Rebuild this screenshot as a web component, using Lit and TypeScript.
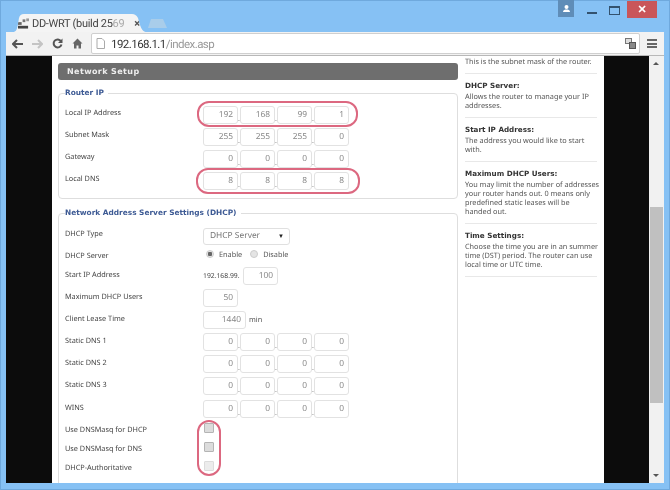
import { LitElement, html, css } from 'lit'
import { customElement } from 'lit/decorators.js'

type Row = { label: string; kind: 'ip' | 'select' | 'radio' | 'start' | 'num' | 'lease'; vals?: string[] }

const routerRows: Row[] = [
  { label: 'Local IP Address', kind: 'ip', vals: ['192', '168', '99', '1'] },
  { label: 'Subnet Mask', kind: 'ip', vals: ['255', '255', '255', '0'] },
  { label: 'Gateway', kind: 'ip', vals: ['0', '0', '0', '0'] },
  { label: 'Local DNS', kind: 'ip', vals: ['8', '8', '8', '8'] },
]

const zeros = ['0', '0', '0', '0']
const dhcpRows: Row[] = [
  { label: 'DHCP Type', kind: 'select' },
  { label: 'DHCP Server', kind: 'radio' },
  { label: 'Start IP Address', kind: 'start' },
  { label: 'Maximum DHCP Users', kind: 'num' },
  { label: 'Client Lease Time', kind: 'lease' },
  { label: 'Static DNS 1', kind: 'ip', vals: zeros },
  { label: 'Static DNS 2', kind: 'ip', vals: zeros },
  { label: 'Static DNS 3', kind: 'ip', vals: zeros },
  { label: 'WINS', kind: 'ip', vals: zeros },
]

const checks = ['Use DNSMasq for DHCP', 'Use DNSMasq for DNS', 'DHCP-Authoritative']

// line breaks as they fall in the reference
const help = [
  { title: '', text: 'This is the subnet mask of the router.' },
  { title: 'DHCP Server:', text: 'Allows the router to manage your IP\naddresses.' },
  { title: 'Start IP Address:', text: 'The address you would like to start\nwith.' },
  { title: 'Maximum DHCP Users:', text: 'You may limit the number of addresses\nyour router hands out. 0 means only\npredefined static leases will be\nhanded out.' },
  { title: 'Time Settings:', text: 'Choose the time you are in an summer\ntime (DST) period. The router can use\nlocal time or UTC time.' },
]

@customElement('app-root')
export class AppRoot extends LitElement {
  static styles = css`
    :host {
      display: block;
      width: 670px;
      height: 490px;
      overflow: hidden;
      font-family: 'Noto Sans', sans-serif;
      text-rendering: geometricPrecision;
    }
    .frame {
      position: relative;
      width: 670px;
      height: 490px;
      background: #86c1f4;
      box-shadow: inset 0 0 0 1px #6fa9dd;
      display: flex;
      flex-direction: column;
      padding: 0 6px 7px 6px;
      box-sizing: border-box;
      filter: blur(0.35px);
    }
    .titlebar {
      height: 32px;
      flex: none;
      display: flex;
      align-items: flex-end;
      justify-content: space-between;
    }
    .tabs {
      display: flex;
      align-items: flex-end;
      padding-left: 6px;
      gap: 1px;
    }
    .tab {
      width: 135px;
      height: 18px;
      background: #f4f4f4;
      clip-path: path('M0 18C5 18 5 16 7 4C8 1 9 0 12 0L120 0C123 0 124 1 126 4C129 16 131 18 135 18Z');
      display: flex;
      align-items: center;
      padding: 0 0 0 6px;
      box-sizing: border-box;
      font: 11px 'Roboto', sans-serif;
      letter-spacing: -0.3px;
      color: #444;
      white-space: nowrap;
      gap: 3px;
    }
    .tab svg {
      flex: none;
    }
    .tab .x {
      margin-left: 7px;
      font-size: 11px;
      font-weight: bold;
      color: #555;
    }
    .tab .fade {
      color: #aaa;
    }
    .newtab {
      width: 19px;
      height: 9px;
      margin-bottom: 4px;
      background: #a9cdea;
      clip-path: polygon(0 100%, 3px 0, 15px 0, 19px 100%);
    }
    .winbtns {
      display: flex;
      align-self: flex-start;
      align-items: flex-start;
      margin-right: 7px;
    }
    .user {
      width: 16px;
      height: 17px;
      background: #5f8db8;
      margin-right: 12px;
      display: flex;
      align-items: center;
      justify-content: center;
    }
    .minbtn {
      width: 12px;
      height: 17px;
      position: relative;
      margin-right: 11px;
    }
    .minbtn::after {
      content: '';
      position: absolute;
      left: 1px;
      right: 1px;
      top: 12px;
      height: 2px;
      background: #33526e;
    }
    .maxbtn {
      width: 9px;
      height: 6px;
      margin: 6px 7px 0 0;
      border: 1px solid #33526e;
      border-top-width: 2px;
    }
    .close {
      width: 30px;
      height: 17px;
      margin-top: 1px;
      background: #c9565a;
      color: #fff;
      font: bold 11px 'Liberation Sans', sans-serif;
      display: flex;
      align-items: center;
      justify-content: center;
    }
    .toolbar {
      height: 24px;
      flex: none;
      background: #f2f2f2;
      display: flex;
      align-items: center;
      border-bottom: 1px solid #b8b8b8;
      box-sizing: border-box;
      padding: 0 6px 0 6px;
    }
    .nav {
      display: flex;
      align-items: center;
      gap: 9px;
      width: 79px;
      flex: none;
    }
    .omnibox {
      flex: 1;
      height: 21px;
      background: #fff;
      border: 1px solid #cfcfcf;
      border-radius: 2px;
      box-sizing: border-box;
      display: flex;
      align-items: center;
      padding: 0 2px 0 4px;
      font: 11.5px 'Roboto', sans-serif;
      letter-spacing: -0.55px;
      color: #333;
      gap: 6px;
    }
    .omnibox .path {
      color: #999;
    }
    .omnibox .url {
      flex: 1;
    }
    .menu {
      width: 10px;
      margin-left: 7px;
      margin-right: 1px;
      flex: none;
      display: flex;
      flex-direction: column;
      gap: 1.5px;
    }
    .menu i {
      display: block;
      height: 2px;
      background: #666;
    }
    .viewport {
      flex: 1;
      min-height: 0;
      display: flex;
      background: #0c0c0c;
      overflow: hidden;
    }
    .page {
      margin-left: 46px;
      width: 552px;
      flex: none;
      background: #fff;
      display: flex;
      box-sizing: border-box;
      padding: 7px 0 0 6px;
      gap: 7px;
      overflow: hidden;
    }
    .main {
      width: 400px;
      flex: none;
    }
    .header {
      height: 17px;
      background: #6e6e6e;
      border-radius: 3px;
      color: #eee;
      font: bold 8px 'DejaVu Sans', sans-serif;
      letter-spacing: 0.4px;
      display: flex;
      align-items: center;
      padding-left: 9px;
    }
    fieldset {
      margin: 0;
      padding: 8px 0 0 6px;
      border: 1px solid #dedede;
      border-radius: 4px;
      min-width: 0;
    }
    .router {
      margin-top: 8px;
      height: 111px;
      box-sizing: border-box;
    }
    .dhcp {
      margin-top: 9px;
      height: 300px;
      padding-top: 9px;
      box-sizing: border-box;
    }
    legend {
      padding: 0 4px 0 0;
      margin-left: 0;
      font: bold 7.4px 'DejaVu Sans', sans-serif;
      color: #3d5a94;
      line-height: 10px;
    }
    .row {
      display: flex;
      height: 22.1px;
      align-items: flex-start;
      font-size: 7.3px;
      line-height: 10px;
      color: #444;
    }
    .row.select-row {
      height: 21px;
    }
    .row.radio-row {
      height: 19px;
    }
    .row.radio-row .ctrl {
      margin-top: -2px;
    }
    .row .label {
      width: 138px;
      flex: none;
      padding-top: 2px;
    }
    .dhcp .row .label {
      padding-top: 3px;
    }
    .dhcp .row.select-row .label {
      padding-top: 2px;
    }
    .ctrl {
      display: flex;
      align-items: center;
      height: 18px;
      color: #555;
    }
    .inp {
      width: 35px;
      height: 18px;
      border: 1px solid #e2e2e2;
      border-radius: 3px;
      box-sizing: border-box;
      display: flex;
      align-items: center;
      justify-content: flex-end;
      padding-right: 4px;
      color: #888;
      font-size: 8.4px;
      background: #fff;
    }
    .inp.wide {
      width: 43px;
    }
    .dot {
      width: 2px;
      align-self: flex-end;
      font-size: 7px;
      line-height: 9px;
      color: #666;
    }
    .select {
      width: 87px;
      height: 17px;
      border: 1px solid #e0e0e0;
      border-radius: 3px;
      box-sizing: border-box;
      display: flex;
      align-items: center;
      justify-content: space-between;
      padding: 0 5px 0 6px;
      font-size: 8.4px;
      color: #777;
    }
    .select b {
      font-size: 6px;
      color: #222;
    }
    .radio {
      width: 8px;
      height: 8px;
      border-radius: 50%;
      background: #e4e4e4;
      border: 1px solid #ccc;
      box-sizing: border-box;
      margin: -2px 5px 0 3px;
    }
    .radio.on {
      background: radial-gradient(circle, #666 0 2px, #e4e4e4 2.5px);
    }
    .radio + span {
      margin-right: 5px;
    }
    .ip-prefix {
      width: 40px;
      flex: none;
      font-size: 6.8px;
      color: #444;
    }
    .unit {
      margin-left: 3px;
    }
    .checks {
      margin-top: -2px;
    }
    .check-row {
      height: 19px;
      display: flex;
      align-items: center;
      font-size: 7.3px;
      color: #444;
    }
    .check-row .label {
      width: 139px;
      flex: none;
      padding-top: 2px;
    }
    .box {
      width: 8px;
      height: 8px;
      background: #dcdcdc;
      border: 1px solid #b4b4b4;
      border-radius: 1px;
      margin-top: -2px;
    }
    .box.faint {
      background: #ececec;
      border-color: #dcdcdc;
    }
    .side {
      width: 132px;
      flex: none;
      font-size: 7.3px;
      line-height: 9px;
      color: #555;
      margin-top: -7px;
    }
    .help {
      border-bottom: 1px solid #e8e8e8;
      padding: 6.5px 0 6px;
    }
    .help.first {
      padding: 1.5px 0 6.5px;
    }
    .help h4 {
      margin: 0 0 2.5px;
      font: bold 7.2px/10px 'DejaVu Sans', sans-serif;
      color: #333;
    }
    .help p {
      margin: 0;
      white-space: pre;
    }
    .scrollbar {
      margin-left: auto;
      width: 15px;
      flex: none;
      background: #f1f1f1;
      position: relative;
    }
    .thumb {
      position: absolute;
      left: 1px;
      right: 1px;
      top: 151px;
      height: 196px;
      background: #c0c0c0;
    }
    .up,
    .down {
      position: absolute;
      left: 4px;
      width: 0;
      height: 0;
      border: 3px solid transparent;
    }
    .up {
      top: 6px;
      border-top: 0;
      border-bottom: 3px solid #555;
    }
    .down {
      bottom: 6px;
      border-bottom: 0;
      border-top: 3px solid #555;
    }
    .oval {
      position: absolute;
      box-sizing: border-box;
      border: 2px solid #dc6880;
      border-radius: 12px;
      pointer-events: none;
    }
    .o1 { left: 197px; top: 101px; width: 161px; height: 26px; }
    .o2 { left: 196px; top: 168px; width: 164px; height: 26px; }
    .o3 { left: 197px; top: 420px; width: 24px; height: 56px; }
  `

  renderControl(r: Row) {
    switch (r.kind) {
      case 'ip':
        return html`${r.vals!.map((v, i) => html`<span class="inp">${v}</span>${i < 3 ? html`<span class="dot">.</span>` : ''}`)}`
      case 'select':
        return html`<span class="select">DHCP Server<b>▼</b></span>`
      case 'radio':
        return html`<span class="radio on"></span><span>Enable</span><span class="radio"></span><span>Disable</span>`
      case 'start':
        return html`<span class="ip-prefix">192.168.99.</span><span class="inp">100</span>`
      case 'num':
        return html`<span class="inp">50</span>`
      case 'lease':
        return html`<span class="inp wide">1440</span><span class="unit">min</span>`
      default:
        return ''
    }
  }

  renderRow(r: Row) {
    return html`<div class="row ${r.kind}-row"><span class="label">${r.label}</span><div class="ctrl">${this.renderControl(r)}</div></div>`
  }

  render() {
    return html`
      <div class="frame">
        <div class="titlebar">
          <div class="tabs">
            <div class="tab">
              <svg width="11" height="11" viewBox="0 0 12 11"><rect x="0" y="4" width="4" height="3" fill="#666"/><rect x="5" y="1" width="3" height="3" fill="#777"/><rect x="9" y="0" width="3" height="3" fill="#999"/><rect x="0" y="8" width="11" height="3" fill="#444"/></svg>
              <span>DD-WRT (build 25<span class="fade">69</span></span><span class="x">×</span>
            </div>
            <div class="newtab"></div>
          </div>
          <div class="winbtns">
            <div class="user"><svg width="9" height="9" viewBox="0 0 9 9"><circle cx="4.500" cy="3" r="2" fill="#fff"/><path d="M1 8c0-2 2-2.500 3.500-2.500S8 6 8 8z" fill="#fff"/></svg></div>
            <div class="minbtn"></div>
            <div class="maxbtn"></div>
            <div class="close">✕</div>
          </div>
        </div>
        <div class="toolbar">
          <div class="nav">
            <svg width="11" height="10" viewBox="0 0 11 10"><path d="M5 1L1 5l4 4M1 5h10" fill="none" stroke="#555" stroke-width="2"/></svg>
            <svg width="11" height="10" viewBox="0 0 11 10"><path d="M6 1l4 4-4 4M10 5H0" fill="none" stroke="#c4c4c4" stroke-width="2"/></svg>
            <svg width="11" height="11" viewBox="0 0 11 11"><path d="M9 3.200A4 4 0 1 0 9.500 6.500" fill="none" stroke="#555" stroke-width="2"/><path d="M10.500 0.500v4.500h-4.500z" fill="#555"/></svg>
            <svg width="11" height="11" viewBox="0 0 11 11"><path d="M5.500 0.500L0.500 5.500h1.500v5h2.500v-3h2v3h2.500v-5h1.500z" fill="#666"/></svg>
          </div>
          <div class="omnibox">
            <svg width="9" height="11" viewBox="0 0 9 11"><path d="M1 .5h5l2.500 2.500v7.500H1z" fill="#fff" stroke="#aaa"/></svg>
            <span class="url">192.168.1.1<span class="path">/index.asp</span></span>
            <svg width="12" height="11" viewBox="0 0 12 11"><rect x="0.500" y="0.500" width="6" height="5" fill="#ddd" stroke="#777"/><rect x="4.500" y="4.500" width="6" height="6" fill="#888" stroke="#555"/></svg>
          </div>
          <div class="menu"><i></i><i></i><i></i></div>
        </div>
        <div class="viewport">
          <div class="page">
            <div class="main">
              <div class="header">Network Setup</div>
              <fieldset class="router">
                <legend>Router IP</legend>
                ${routerRows.map((r) => this.renderRow(r))}
              </fieldset>
              <fieldset class="dhcp">
                <legend>Network Address Server Settings (DHCP)</legend>
                ${dhcpRows.map((r) => this.renderRow(r))}
                <div class="checks">
                  ${checks.map((c, i) => html`<div class="check-row"><span class="label">${c}</span><span class="box ${i === 2 ? 'faint' : ''}"></span></div>`)}
                </div>
              </fieldset>
            </div>
            <div class="side">
              ${help.map((h, i) => html`<div class="help ${i === 0 ? 'first' : ''}">${h.title ? html`<h4>${h.title}</h4>` : ''}<p>${h.text}</p></div>`)}
            </div>
          </div>
          <div class="scrollbar"><div class="up"></div><div class="thumb"></div><div class="down"></div></div>
        </div>
        <div class="oval o1"></div>
        <div class="oval o2"></div>
        <div class="oval o3"></div>
      </div>
    `
  }
}
